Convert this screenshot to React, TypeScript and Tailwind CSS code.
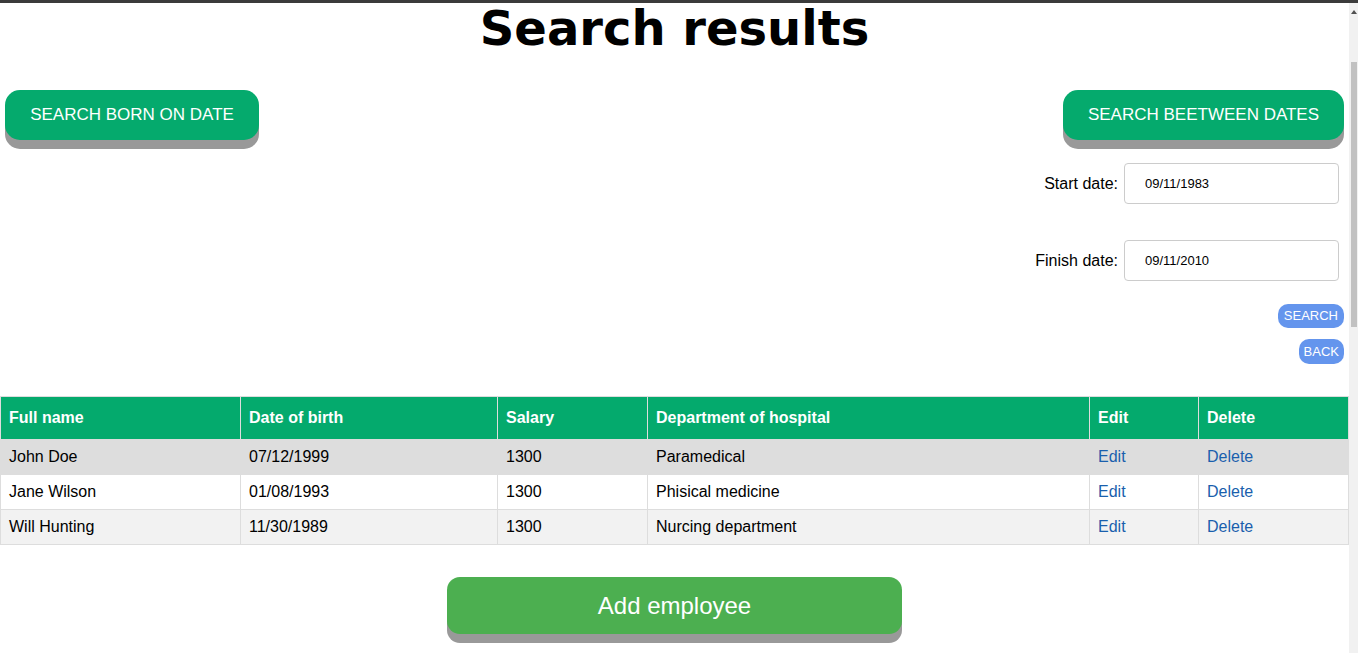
const employees = [
  { name: "John Doe", born: "07/12/1999", salary: "1300", dept: "Paramedical" },
  { name: "Jane Wilson", born: "01/08/1993", salary: "1300", dept: "Phisical medicine" },
  { name: "Will Hunting", born: "11/30/1989", salary: "1300", dept: "Nurcing department" },
]

const rowBg = ["bg-[#dddddd]", "bg-white", "bg-[#f2f2f2]"]

export default function App() {
  return (
    <div className="w-[1358px] h-[653px] overflow-hidden bg-white flex flex-col font-['Liberation_Sans',Arial,sans-serif] text-black">
      <div className="h-[3px] bg-[#3b3b3b] shrink-0" />
      <div className="flex flex-1 min-h-0">
        <main className="w-[1349px] shrink-0 flex flex-col">
          <h1 className="text-center font-['DejaVu_Sans',Verdana,sans-serif] font-bold text-[48px] leading-[48px] mt-[1px]">
            Search results
          </h1>

          <div className="flex justify-between items-start px-[5px] mt-[38px]">
            <button className="w-[254px] h-[50px] rounded-[15px] bg-[#05aa6d] text-white text-[17px] shadow-[0_9px_0_#999999]">
              SEARCH BORN ON DATE
            </button>

            <div className="flex flex-col items-end">
              <button className="w-[281px] h-[50px] rounded-[15px] bg-[#05aa6d] text-white text-[17px] shadow-[0_9px_0_#999999]">
                SEARCH BEETWEEN DATES
              </button>

              <div className="flex flex-col items-end gap-[36px] mt-[23px] pr-[5px]">
                <label className="flex items-center gap-[6px] text-[16px]">
                  <span>Start date:</span>
                  <input
                    readOnly
                    value="09/11/1983"
                    className="w-[215px] h-[41px] border border-[#cccccc] rounded-[4px] pl-[20px] text-[13px] outline-none"
                  />
                </label>
                <label className="flex items-center gap-[6px] text-[16px]">
                  <span>Finish date:</span>
                  <input
                    readOnly
                    value="09/11/2010"
                    className="w-[215px] h-[41px] border border-[#cccccc] rounded-[4px] pl-[20px] text-[13px] outline-none"
                  />
                </label>
              </div>

              <button className="mt-[23px] h-[24px] px-[6px] rounded-[10px] bg-[#6495ed] text-white text-[13px]">SEARCH</button>
              <button className="mt-[11px] h-[25px] px-[5px] rounded-[10px] bg-[#6495ed] text-white text-[13px]">BACK</button>
            </div>
          </div>

          <table className="mt-[32px] w-full border-collapse text-[16px] leading-[18px] text-left">
            <tbody>
              <tr className="bg-[#04aa6d] text-white">
                <th className="w-[240px] border border-[#dddddd] px-[8px] pt-[12px] pb-[12px] font-bold">Full name</th>
                <th className="w-[257px] border border-[#dddddd] px-[8px] pt-[12px] pb-[12px] font-bold">Date of birth</th>
                <th className="w-[150px] border border-[#dddddd] px-[8px] pt-[12px] pb-[12px] font-bold">Salary</th>
                <th className="w-[442px] border border-[#dddddd] px-[8px] pt-[12px] pb-[12px] font-bold">Department of hospital</th>
                <th className="w-[109px] border border-[#dddddd] px-[8px] pt-[12px] pb-[12px] font-bold">Edit</th>
                <th className="border border-[#dddddd] px-[8px] pt-[12px] pb-[12px] font-bold">Delete</th>
              </tr>
              {employees.map((e, i) => (
                <tr key={e.name} className={rowBg[i]}>
                  <td className="border border-[#dddddd] p-[8px]">{e.name}</td>
                  <td className="border border-[#dddddd] p-[8px]">{e.born}</td>
                  <td className="border border-[#dddddd] p-[8px]">{e.salary}</td>
                  <td className="border border-[#dddddd] p-[8px]">{e.dept}</td>
                  <td className="border border-[#dddddd] p-[8px] text-[#1a5fad]">Edit</td>
                  <td className="border border-[#dddddd] p-[8px] text-[#1a5fad]">Delete</td>
                </tr>
              ))}
            </tbody>
          </table>

          <div className="flex justify-center mt-[32px]">
            <button className="w-[455px] h-[57px] rounded-[13px] bg-[#4caf50] text-white text-[24px] shadow-[0_9px_0_#999999]">
              Add employee
            </button>
          </div>
        </main>

        <div className="w-[9px] shrink-0 bg-[#f1f1f1] flex flex-col items-center">
          <div className="mt-[7px] w-0 h-0 border-l-[3px] border-r-[3px] border-b-[4px] border-l-transparent border-r-transparent border-b-[#505050]" />
          <div className="mt-[48px] w-[6px] h-[265px] bg-[#c1c1c1]" />
        </div>
      </div>
    </div>
  )
}
